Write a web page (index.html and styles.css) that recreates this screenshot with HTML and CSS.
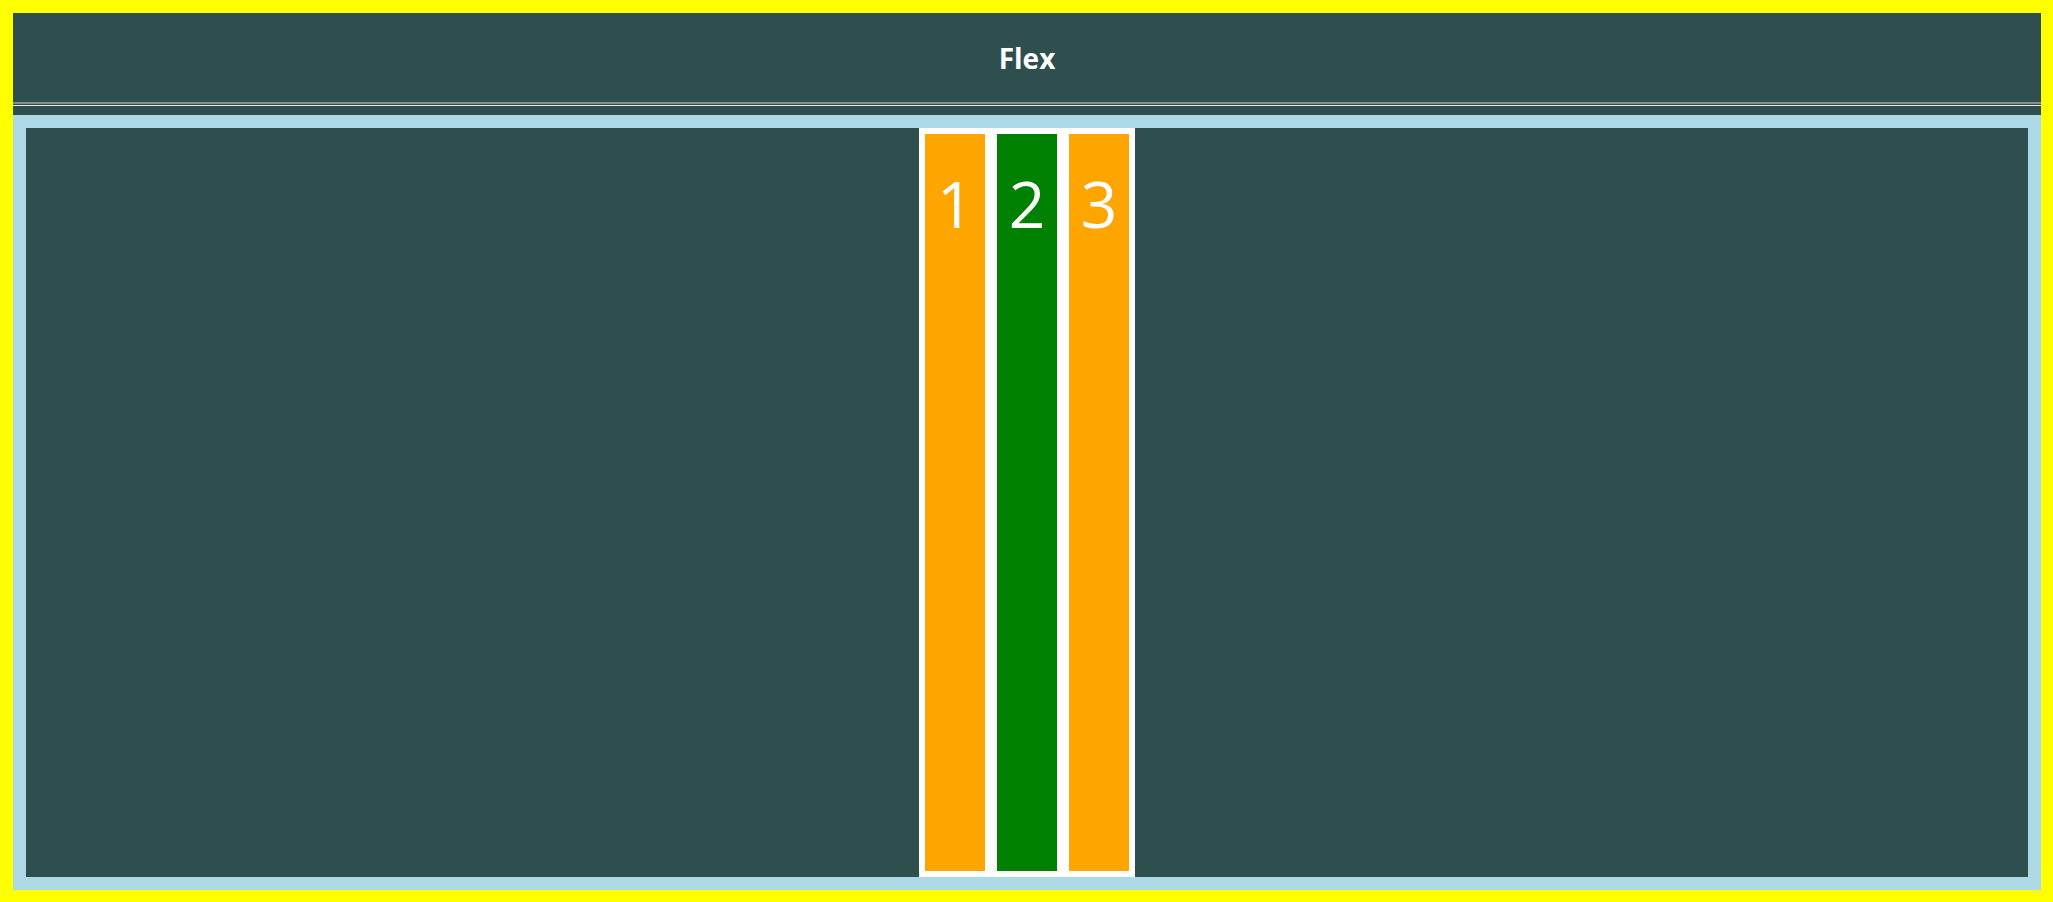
FILE: index.html
```html
<!DOCTYPE html>
<html>
<head>
<meta charset="utf-8">
<link rel="stylesheet" href="styles.css">
</head>
<body>
<header class="header">
  <div class="title-row"><h1 class="title">Flex</h1></div>
  <div class="rule"></div>
</header>
<main class="stage">
  <div class="flex-box">
    <div class="item item-orange">1</div>
    <div class="item item-green">2</div>
    <div class="item item-orange">3</div>
  </div>
</main>
</body>
</html>
```
FILE: styles.css
```css
html, body {
  height: 100%;
}
body {
  margin: 0;
  box-sizing: border-box;
  background: #ffff00;
  padding: 13px 12px 12px 13px;
  display: flex;
  flex-direction: column;
  font-family: "Open Sans", "Noto Sans", sans-serif;
}
.header {
  background: #2f4f4f;
  height: 102px;
  display: flex;
  flex-direction: column;
}
.title-row {
  height: 89px;
  display: flex;
  align-items: center;
  justify-content: center;
  padding-top: 2px;
  box-sizing: border-box;
}
.title {
  margin: 0;
  color: #ffffff;
  font-size: 28px;
  font-weight: 700;
  line-height: 1.3;
}
.rule {
  height: 1px;
  border-top: 2px solid #8c8c8c;
  border-bottom: 1px solid #e8e8e8;
}
.stage {
  flex: 1;
  min-height: 0;
  border: 13px solid #add8e6;
  background: #2f4f4f;
  display: flex;
  justify-content: center;
}
.flex-box {
  background: #ffffff;
  display: flex;
  align-items: stretch;
}
.item {
  width: 60px;
  margin: 6px;
  color: #ffffff;
  font-size: 64px;
  font-weight: 400;
  line-height: 1;
  text-align: center;
  padding-top: 38px;
  box-sizing: border-box;
}
.item-orange {
  background: #ffa500;
}
.item-green {
  background: #008000;
}
```
